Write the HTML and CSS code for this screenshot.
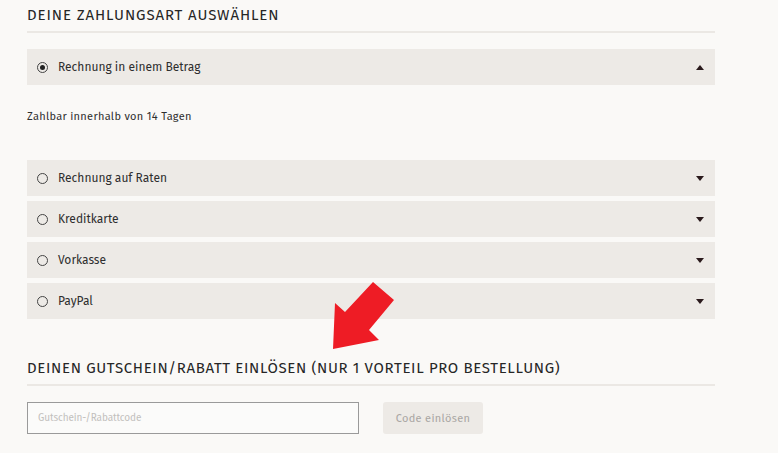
FILE: index.html
```html
<!DOCTYPE html>
<html lang="de">
<head>
<meta charset="utf-8">
<link rel="stylesheet" href="styles.css">
</head>
<body>
<div class="page">
  <h2 class="heading">DEINE ZAHLUNGSART AUSWÄHLEN</h2>
  <div class="option first">
    <span class="radio checked"></span>
    <span class="label">Rechnung in einem Betrag</span>
    <span class="caret up"></span>
  </div>
  <p class="desc">Zahlbar innerhalb von 14 Tagen</p>
  <div class="options">
    <div class="option">
      <span class="radio"></span>
      <span class="label">Rechnung auf Raten</span>
      <span class="caret"></span>
    </div>
    <div class="option">
      <span class="radio"></span>
      <span class="label">Kreditkarte</span>
      <span class="caret"></span>
    </div>
    <div class="option">
      <span class="radio"></span>
      <span class="label">Vorkasse</span>
      <span class="caret"></span>
    </div>
    <div class="option">
      <span class="radio"></span>
      <span class="label">PayPal</span>
      <span class="caret"></span>
    </div>
  </div>
  <h2 class="heading second">DEINEN GUTSCHEIN/RABATT EINLÖSEN (NUR 1 VORTEIL PRO BESTELLUNG)</h2>
  <div class="voucher">
    <input class="code" type="text" placeholder="Gutschein-/Rabattcode">
    <button class="redeem" type="button">Code einlösen</button>
  </div>
</div>
<svg class="arrow" width="778" height="453" viewBox="0 0 778 453">
  <polygon points="373,282 394,300 369,330 379,340 333,349 335,303 345,312" fill="#ee1c25"/>
</svg>
</body>
</html>
```
FILE: styles.css
```css
html, body {
  margin: 0;
  padding: 0;
  background: #faf9f7;
}
body {
  font-family: "Fira Sans", "Roboto", "Liberation Sans", sans-serif;
  color: #333;
  position: relative;
  width: 778px;
  height: 453px;
  overflow: hidden;
}
.page {
  width: 688px;
  padding-left: 27px;
}
.heading {
  margin: 0;
  padding-top: 5px;
  padding-bottom: 6px;
  font-size: 15px;
  line-height: 20px;
  font-weight: 400;
  letter-spacing: 0.9px;
  color: #262626;
  border-bottom: 2px solid #ebe8e4;
}
.heading.second {
  margin-top: 39px;
  padding-top: 0;
  padding-bottom: 6px;
  letter-spacing: 0.65px;
}
.option {
  display: flex;
  align-items: center;
  height: 36px;
  background: #edeae6;
  padding: 0 11px 0 10px;
}
.option.first {
  margin-top: 16px;
}
.options {
  display: flex;
  flex-direction: column;
  gap: 5px;
}
.radio {
  width: 9px;
  height: 9px;
  border: 1.5px solid #444;
  border-radius: 50%;
  margin-right: 10px;
  position: relative;
  flex: none;
}
.radio.checked::after {
  content: "";
  position: absolute;
  left: 2px;
  top: 2px;
  width: 5px;
  height: 5px;
  border-radius: 50%;
  background: #222;
}
.label {
  flex: 1;
  font-size: 12px;
  font-weight: 400;
  letter-spacing: 0;
  color: #2e2e2e;
}
.caret {
  width: 0;
  height: 0;
  border-left: 4px solid transparent;
  border-right: 4px solid transparent;
  border-top: 5px solid #2a1a1c;
}
.caret.up {
  border-top: 0;
  border-bottom: 5px solid #2a1a1c;
}
.desc {
  margin: 24px 0 35px;
  font-size: 11px;
  line-height: 16px;
  letter-spacing: 0.3px;
  color: #2e2e2e;
}
.voucher {
  display: flex;
  gap: 24px;
  margin-top: 16px;
}
.code {
  width: 332px;
  height: 32px;
  box-sizing: border-box;
  border: 1px solid #9a9a9a;
  background: #fbfbfa;
  padding: 0 10px;
  font-family: inherit;
  font-size: 10px;
  letter-spacing: -0.1px;
  outline: none;
}
.code::placeholder {
  color: #c2c0bd;
}
.redeem {
  width: 100px;
  height: 32px;
  border: 0;
  border-radius: 3px;
  background: #edeae6;
  color: #a9a6a3;
  font-family: inherit;
  font-size: 11px;
  font-weight: 400;
  letter-spacing: 0.3px;
}
.arrow {
  position: absolute;
  left: 0;
  top: 0;
  pointer-events: none;
}
```
